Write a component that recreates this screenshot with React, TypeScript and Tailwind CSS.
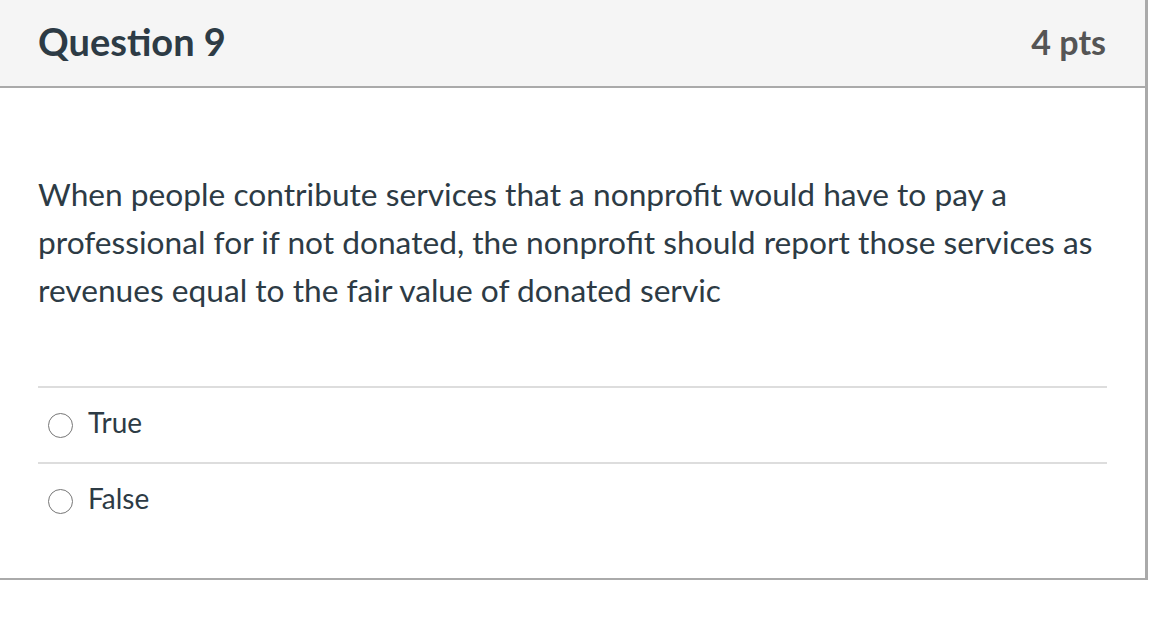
export default function App() {
  const answers = ['True', 'False'];

  return (
    <div className="min-h-screen bg-white" style={{ fontFamily: 'Lato, "Noto Sans", sans-serif' }}>
      <div className="w-[1148px] border-r-[3px] border-b-2 border-[#aaaaaa]">
        {/* header */}
        <div className="flex h-[88px] items-center justify-between border-b-2 border-[#aaaaaa] bg-[#f5f5f5] pb-1 pl-[38px] pr-[39px]">
          <h2 className="text-[38px] font-bold text-[#2d3b45]">Question 9</h2>
          <div className="text-[34px] font-bold text-[#555555]">4 pts</div>
        </div>

        {/* body */}
        <div className="px-[38px] pb-[40px] pt-[82px]">
          <p className="text-[31.7px] leading-[48px] text-[#2d3b45]">
            When people contribute services that a nonprofit would have to pay a professional for if not donated, the
            nonprofit should report those services as revenues equal to the fair value of donated servic
          </p>

          <div className="mt-[72px]">
            {answers.map((a) => (
              <label key={a} className="flex h-[76px] items-center gap-[15px] border-t-2 border-[#dddddd] pl-[10px]">
                <span className="h-[25px] w-[25px] rounded-full border-[1.5px] border-[#777777] bg-white" />
                <span className="mb-[6px] text-[28px] text-[#2d3b45]">{a}</span>
              </label>
            ))}
          </div>
        </div>
      </div>
    </div>
  );
}
